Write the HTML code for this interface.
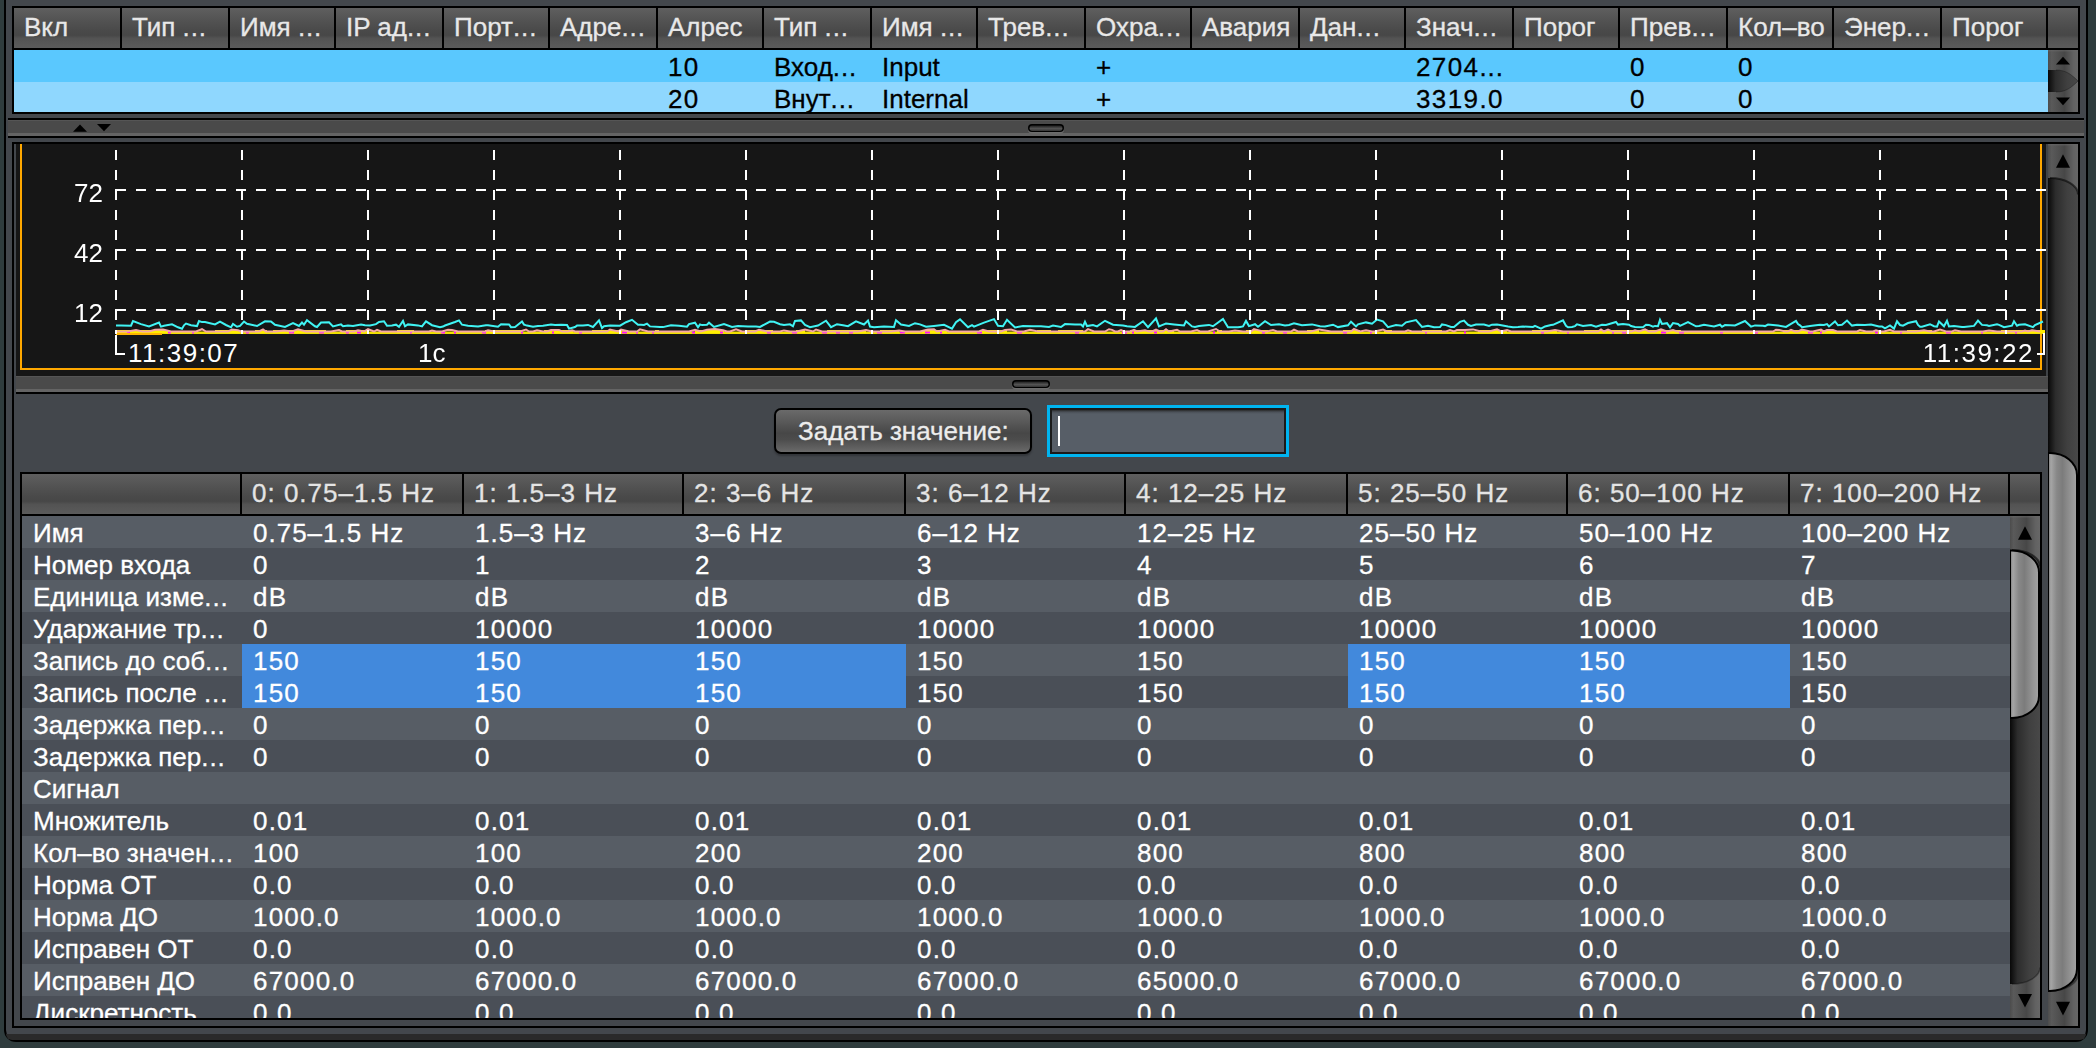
<!DOCTYPE html>
<html><head><meta charset="utf-8"><style>
html,body{margin:0;padding:0;width:2096px;height:1048px;overflow:hidden;background:#2f3c3d;}
div{position:absolute;}
.t{font-family:"Liberation Sans", sans-serif;font-size:26px;line-height:32px;height:32px;white-space:pre;-webkit-text-stroke:0.3px currentColor;}
</style></head><body>
<div style="left:4px;top:-20px;width:2084px;height:1062px;background:#43474c;border:2px solid #000;border-radius:0 0 12px 12px;box-sizing:border-box;"></div><div style="left:6px;top:1034px;width:2080px;height:6px;background:#2a2a2a;border-radius:0 0 10px 10px;"></div><div style="left:12px;top:6px;width:2068px;height:108px;background:#000;"></div><div style="left:14px;top:8px;width:2064px;height:40px;background:linear-gradient(to bottom,#5f5f5f 0%,#535353 30%,#4a4a4a 55%,#474747 68%,#535353 76%,#5b5b5b 100%);"></div><div style="left:120px;top:8px;width:2px;height:40px;background:#000;"></div><div style="left:228px;top:8px;width:2px;height:40px;background:#000;"></div><div style="left:334px;top:8px;width:2px;height:40px;background:#000;"></div><div style="left:442px;top:8px;width:2px;height:40px;background:#000;"></div><div style="left:548px;top:8px;width:2px;height:40px;background:#000;"></div><div style="left:656px;top:8px;width:2px;height:40px;background:#000;"></div><div style="left:762px;top:8px;width:2px;height:40px;background:#000;"></div><div style="left:870px;top:8px;width:2px;height:40px;background:#000;"></div><div style="left:976px;top:8px;width:2px;height:40px;background:#000;"></div><div style="left:1084px;top:8px;width:2px;height:40px;background:#000;"></div><div style="left:1190px;top:8px;width:2px;height:40px;background:#000;"></div><div style="left:1298px;top:8px;width:2px;height:40px;background:#000;"></div><div style="left:1404px;top:8px;width:2px;height:40px;background:#000;"></div><div style="left:1512px;top:8px;width:2px;height:40px;background:#000;"></div><div style="left:1618px;top:8px;width:2px;height:40px;background:#000;"></div><div style="left:1726px;top:8px;width:2px;height:40px;background:#000;"></div><div style="left:1832px;top:8px;width:2px;height:40px;background:#000;"></div><div style="left:1940px;top:8px;width:2px;height:40px;background:#000;"></div><div style="left:2046px;top:8px;width:2px;height:40px;background:#000;"></div><div style="left:14px;top:50px;width:2034px;height:32px;background:#5ac8fe;"></div><div style="left:14px;top:82px;width:2034px;height:30px;background:#8fd7fe;"></div><div class="t" style="left:24px;top:11px;color:#e8e8e8;">Вкл</div><div class="t" style="left:132px;top:11px;color:#e8e8e8;">Тип <span style="letter-spacing:0.9px">...</span></div><div class="t" style="left:240px;top:11px;color:#e8e8e8;">Имя <span style="letter-spacing:0.9px">...</span></div><div class="t" style="left:346px;top:11px;color:#e8e8e8;">IP ад<span style="letter-spacing:0.9px">...</span></div><div class="t" style="left:454px;top:11px;color:#e8e8e8;">Порт<span style="letter-spacing:0.9px">...</span></div><div class="t" style="left:560px;top:11px;color:#e8e8e8;">Адре<span style="letter-spacing:0.9px">...</span></div><div class="t" style="left:668px;top:11px;color:#e8e8e8;">Алрес</div><div class="t" style="left:774px;top:11px;color:#e8e8e8;">Тип <span style="letter-spacing:0.9px">...</span></div><div class="t" style="left:882px;top:11px;color:#e8e8e8;">Имя <span style="letter-spacing:0.9px">...</span></div><div class="t" style="left:988px;top:11px;color:#e8e8e8;">Трев<span style="letter-spacing:0.9px">...</span></div><div class="t" style="left:1096px;top:11px;color:#e8e8e8;">Охра<span style="letter-spacing:0.9px">...</span></div><div class="t" style="left:1202px;top:11px;color:#e8e8e8;">Авария</div><div class="t" style="left:1310px;top:11px;color:#e8e8e8;">Дан<span style="letter-spacing:0.9px">...</span></div><div class="t" style="left:1416px;top:11px;color:#e8e8e8;">Знач<span style="letter-spacing:0.9px">...</span></div><div class="t" style="left:1524px;top:11px;color:#e8e8e8;">Порог</div><div class="t" style="left:1630px;top:11px;color:#e8e8e8;">Прев<span style="letter-spacing:0.9px">...</span></div><div class="t" style="left:1738px;top:11px;color:#e8e8e8;">Кол–во</div><div class="t" style="left:1844px;top:11px;color:#e8e8e8;">Энер<span style="letter-spacing:0.9px">...</span></div><div class="t" style="left:1952px;top:11px;color:#e8e8e8;">Порог</div><div class="t" style="left:668px;top:51px;color:#000;letter-spacing:1.4px;">10</div><div class="t" style="left:774px;top:51px;color:#000;">Вход<span style="letter-spacing:0.9px">...</span></div><div class="t" style="left:882px;top:51px;color:#000;">Input</div><div class="t" style="left:1096px;top:51px;color:#000;">+</div><div class="t" style="left:1416px;top:51px;color:#000;letter-spacing:1.4px;">2704<span style="letter-spacing:0.9px">...</span></div><div class="t" style="left:1630px;top:51px;color:#000;letter-spacing:1.4px;">0</div><div class="t" style="left:1738px;top:51px;color:#000;letter-spacing:1.4px;">0</div><div class="t" style="left:668px;top:83px;color:#000;letter-spacing:1.4px;">20</div><div class="t" style="left:774px;top:83px;color:#000;">Внут<span style="letter-spacing:0.9px">...</span></div><div class="t" style="left:882px;top:83px;color:#000;">Internal</div><div class="t" style="left:1096px;top:83px;color:#000;">+</div><div class="t" style="left:1416px;top:83px;color:#000;letter-spacing:1.4px;">3319.0</div><div class="t" style="left:1630px;top:83px;color:#000;letter-spacing:1.4px;">0</div><div class="t" style="left:1738px;top:83px;color:#000;letter-spacing:1.4px;">0</div><svg style="position:absolute;left:2048px;top:50px" width="30" height="62"><defs><linearGradient id="sbBtn" x1="0" x2="1"><stop offset="0" stop-color="#4c4c4c"/><stop offset="0.12" stop-color="#5a5a5a"/><stop offset="0.55" stop-color="#474747"/><stop offset="0.85" stop-color="#626262"/><stop offset="1" stop-color="#676767"/></linearGradient><linearGradient id="sbTrk" x1="0" x2="1"><stop offset="0" stop-color="#080808"/><stop offset="0.25" stop-color="#2c2c2c"/><stop offset="0.65" stop-color="#404040"/><stop offset="1" stop-color="#484848"/></linearGradient><linearGradient id="sbThm" x1="0" x2="1"><stop offset="0" stop-color="#767676"/><stop offset="0.1" stop-color="#a6a6a6"/><stop offset="0.3" stop-color="#888888"/><stop offset="0.5" stop-color="#7c7c7c"/><stop offset="0.8" stop-color="#959595"/><stop offset="1" stop-color="#a3a3a3"/></linearGradient></defs><rect x="0" y="0" width="30" height="62" fill="url(#sbBtn)"/><rect x="0" y="0" width="30" height="1.5" fill="#6a6a6a" opacity="0.5"/><path d="M0,20 L8,20 C18,20 24,25.0 30,31.0 C24,37.0 18,42 8,42 L0,42 Z" fill="url(#sbTrk)"/><path d="M8,20 C18,20 24,25.0 30,31.0 C24,37.0 18,42 8,42" fill="none" stroke="#000" stroke-opacity="0.3" stroke-width="1"/><polygon points="8.0,14.5 22.0,14.5 15.0,6.699999999999999" fill="#000"/><polygon points="8.0,47.4 22.0,47.4 15.0,55.199999999999996" fill="#000"/></svg><div style="left:8px;top:118px;width:2076px;height:20px;background:#000;"></div><div style="left:8px;top:120px;width:2076px;height:16px;background:linear-gradient(to bottom,#555 0,#555 1px,#4a4a4a 1px,#4a4a4a 13.5px,#646464 13.5px,#646464 15.5px,#3a3a3a 16px);"></div><svg style="position:absolute;left:0;top:118px" width="2096" height="20"><polygon points="73,13.8 87,13.8 80,6.6" fill="#000"/><polygon points="97,6 111,6 104,13.2" fill="#000"/><defs><linearGradient id="hg" x1="0" x2="0" y1="0" y2="1"><stop offset="0" stop-color="#202020"/><stop offset="0.55" stop-color="#545454"/><stop offset="1" stop-color="#333"/></linearGradient></defs><rect x="1028" y="7.6" width="36" height="8" rx="4" fill="#6c6c6c"/><rect x="1028" y="6" width="36" height="8" rx="4" fill="#000"/><rect x="1029.6" y="7.6" width="32.8" height="5.4" rx="2.7" fill="url(#hg)"/></svg><div style="left:12px;top:142px;width:2068px;height:886px;background:#000;"></div><div style="left:14px;top:144px;width:2034px;height:882px;background:#43474c;"></div><div style="left:16px;top:144px;width:2030px;height:232px;background:#161616;"></div><div style="left:2046px;top:144px;width:2px;height:232px;background:#3f4347;"></div><div style="left:20px;top:144px;width:2px;height:226px;background:#ffa800;"></div><div style="left:2040px;top:144px;width:2px;height:226px;background:#ffa800;"></div><div style="left:20px;top:368px;width:2022px;height:2px;background:#ffa800;"></div><svg style="position:absolute;left:0;top:0" width="2096" height="400"><rect x="116" y="331.5" width="1929" height="2.5" fill="#f0e000"/><rect x="116" y="330" width="14" height="3" fill="#ffee00"/><rect x="130" y="330" width="8" height="3" fill="#ffee00"/><rect x="138" y="330" width="26" height="3" fill="#ffee00"/><rect x="164" y="330" width="5" height="3" fill="#ffee00"/><rect x="215" y="330" width="25" height="3" fill="#ffee00"/><rect x="255" y="330" width="12" height="3" fill="#ffee00"/><rect x="273" y="330" width="27" height="3" fill="#ffee00"/><rect x="300" y="330" width="5" height="3" fill="#ffee00"/><rect x="305" y="330" width="14" height="3" fill="#ffee00"/><rect x="319" y="330" width="7" height="3" fill="#ffee00"/><rect x="346" y="330" width="22" height="3" fill="#ffee00"/><rect x="397" y="330" width="6" height="3" fill="#ffee00"/><rect x="403" y="330" width="11" height="3" fill="#ffee00"/><rect x="485" y="330" width="13" height="3" fill="#ffee00"/><rect x="498" y="330" width="23" height="3" fill="#ffee00"/><rect x="544" y="330" width="19" height="3" fill="#ffee00"/><rect x="563" y="330" width="10" height="3" fill="#ffee00"/><rect x="592" y="330" width="4" height="3" fill="#ffee00"/><rect x="596" y="330" width="22" height="3" fill="#ffee00"/><rect x="618" y="330" width="5" height="3" fill="#ffee00"/><rect x="623" y="330" width="5" height="3" fill="#ffee00"/><rect x="655" y="330" width="4" height="3" fill="#ffee00"/><rect x="695" y="330" width="6" height="3" fill="#ffee00"/><rect x="701" y="330" width="9" height="3" fill="#ffee00"/><rect x="710" y="330" width="9" height="3" fill="#ffee00"/><rect x="719" y="330" width="5" height="3" fill="#ffee00"/><rect x="747" y="330" width="26" height="3" fill="#ffee00"/><rect x="796" y="330" width="9" height="3" fill="#ffee00"/><rect x="827" y="330" width="17" height="3" fill="#ffee00"/><rect x="844" y="330" width="22" height="3" fill="#ffee00"/><rect x="880" y="330" width="19" height="3" fill="#ffee00"/><rect x="922" y="330" width="25" height="3" fill="#ffee00"/><rect x="980" y="330" width="27" height="3" fill="#ffee00"/><rect x="1037" y="330" width="14" height="3" fill="#ffee00"/><rect x="1058" y="330" width="4" height="3" fill="#ffee00"/><rect x="1062" y="330" width="21" height="3" fill="#ffee00"/><rect x="1130" y="330" width="25" height="3" fill="#ffee00"/><rect x="1155" y="330" width="19" height="3" fill="#ffee00"/><rect x="1217" y="330" width="5" height="3" fill="#ffee00"/><rect x="1246" y="330" width="4" height="3" fill="#ffee00"/><rect x="1250" y="330" width="18" height="3" fill="#ffee00"/><rect x="1307" y="330" width="12" height="3" fill="#ffee00"/><rect x="1343" y="330" width="17" height="3" fill="#ffee00"/><rect x="1384" y="330" width="8" height="3" fill="#ffee00"/><rect x="1422" y="330" width="20" height="3" fill="#ffee00"/><rect x="1478" y="330" width="29" height="3" fill="#ffee00"/><rect x="1532" y="330" width="25" height="3" fill="#ffee00"/><rect x="1584" y="330" width="29" height="3" fill="#ffee00"/><rect x="1613" y="330" width="9" height="3" fill="#ffee00"/><rect x="1622" y="330" width="19" height="3" fill="#ffee00"/><rect x="1641" y="330" width="11" height="3" fill="#ffee00"/><rect x="1652" y="330" width="29" height="3" fill="#ffee00"/><rect x="1783" y="330" width="25" height="3" fill="#ffee00"/><rect x="1820" y="330" width="16" height="3" fill="#ffee00"/><rect x="1907" y="330" width="25" height="3" fill="#ffee00"/><rect x="2001" y="330" width="19" height="3" fill="#ffee00"/><rect x="2020" y="330" width="25" height="3" fill="#ffee00"/><rect x="127" y="331.5" width="3" height="2" fill="#ff10ff"/><rect x="168" y="331.5" width="3" height="2" fill="#ff10ff"/><rect x="192" y="331.5" width="2" height="2" fill="#ff10ff"/><rect x="246" y="331.5" width="3" height="2" fill="#ff10ff"/><rect x="289" y="331.5" width="5" height="2" fill="#ff10ff"/><rect x="319" y="331.5" width="5" height="2" fill="#ff10ff"/><rect x="346" y="331.5" width="3" height="2" fill="#ff10ff"/><rect x="357" y="331.5" width="4" height="2" fill="#ff10ff"/><rect x="410" y="331.5" width="2" height="2" fill="#ff10ff"/><rect x="441" y="331.5" width="4" height="2" fill="#ff10ff"/><rect x="454" y="331.5" width="2" height="2" fill="#ff10ff"/><rect x="482" y="331.5" width="4" height="2" fill="#ff10ff"/><rect x="521" y="331.5" width="2" height="2" fill="#ff10ff"/><rect x="552" y="331.5" width="2" height="2" fill="#ff10ff"/><rect x="579" y="331.5" width="3" height="2" fill="#ff10ff"/><rect x="622" y="331.5" width="5" height="2" fill="#ff10ff"/><rect x="636" y="331.5" width="2" height="2" fill="#ff10ff"/><rect x="652" y="331.5" width="2" height="2" fill="#ff10ff"/><rect x="692" y="331.5" width="3" height="2" fill="#ff10ff"/><rect x="720" y="331.5" width="3" height="2" fill="#ff10ff"/><rect x="767" y="331.5" width="4" height="2" fill="#ff10ff"/><rect x="792" y="331.5" width="5" height="2" fill="#ff10ff"/><rect x="822" y="331.5" width="5" height="2" fill="#ff10ff"/><rect x="836" y="331.5" width="4" height="2" fill="#ff10ff"/><rect x="849" y="331.5" width="4" height="2" fill="#ff10ff"/><rect x="877" y="331.5" width="5" height="2" fill="#ff10ff"/><rect x="900" y="331.5" width="5" height="2" fill="#ff10ff"/><rect x="925" y="331.5" width="5" height="2" fill="#ff10ff"/><rect x="940" y="331.5" width="2" height="2" fill="#ff10ff"/><rect x="977" y="331.5" width="5" height="2" fill="#ff10ff"/><rect x="1017" y="331.5" width="5" height="2" fill="#ff10ff"/><rect x="1075" y="331.5" width="4" height="2" fill="#ff10ff"/><rect x="1122" y="331.5" width="5" height="2" fill="#ff10ff"/><rect x="1132" y="331.5" width="2" height="2" fill="#ff10ff"/><rect x="1154" y="331.5" width="3" height="2" fill="#ff10ff"/><rect x="1213" y="331.5" width="2" height="2" fill="#ff10ff"/><rect x="1262" y="331.5" width="3" height="2" fill="#ff10ff"/><rect x="1283" y="331.5" width="4" height="2" fill="#ff10ff"/><rect x="1343" y="331.5" width="4" height="2" fill="#ff10ff"/><rect x="1370" y="331.5" width="2" height="2" fill="#ff10ff"/><rect x="1425" y="331.5" width="2" height="2" fill="#ff10ff"/><rect x="1464" y="331.5" width="2" height="2" fill="#ff10ff"/><rect x="1501" y="331.5" width="2" height="2" fill="#ff10ff"/><rect x="1541" y="331.5" width="3" height="2" fill="#ff10ff"/><rect x="1567" y="331.5" width="2" height="2" fill="#ff10ff"/><rect x="1612" y="331.5" width="2" height="2" fill="#ff10ff"/><rect x="1622" y="331.5" width="4" height="2" fill="#ff10ff"/><rect x="1661" y="331.5" width="5" height="2" fill="#ff10ff"/><rect x="1679" y="331.5" width="5" height="2" fill="#ff10ff"/><rect x="1720" y="331.5" width="3" height="2" fill="#ff10ff"/><rect x="1755" y="331.5" width="3" height="2" fill="#ff10ff"/><rect x="1808" y="331.5" width="5" height="2" fill="#ff10ff"/><rect x="1820" y="331.5" width="2" height="2" fill="#ff10ff"/><rect x="1875" y="331.5" width="3" height="2" fill="#ff10ff"/><rect x="1900" y="331.5" width="2" height="2" fill="#ff10ff"/><rect x="1946" y="331.5" width="5" height="2" fill="#ff10ff"/><rect x="1981" y="331.5" width="2" height="2" fill="#ff10ff"/><rect x="2015" y="331.5" width="2" height="2" fill="#ff10ff"/><rect x="116" y="333" width="46" height="2" fill="#ffb400"/><polyline points="116,331.5 122,331.5 128,331.5 136,330.1 142,331.5 146,331.5 149,331.5 155,329.8 163,329.6 171,331.5 174,331.5 182,331.5 190,331.5 196,331.5 202,329.2 206,331.5 210,331.5 218,331.5 222,331.5 228,331.5 232,329.6 238,330.2 241,331.5 245,331.5 251,331.5 259,331.5 263,329.4 266,331.5 270,331.5 273,331.5 276,331.5 284,330.4 292,331.5 298,329.4 306,331.5 314,331.5 318,331.5 322,331.5 325,331.5 331,331.5 339,330.0 342,331.5 346,331.5 354,331.5 358,330.2 364,331.5 368,329.2 374,331.5 377,329.8 381,331.5 389,331.5 397,331.5 405,331.5 409,331.5 415,331.5 421,331.5 429,331.5 432,330.5 436,331.5 439,331.5 442,331.5 448,329.8 452,330.0 458,331.5 466,331.5 469,331.5 477,331.5 485,331.5 488,330.3 494,331.5 500,331.5 506,331.5 512,331.5 520,331.5 526,329.5 529,331.5 533,331.5 537,330.3 543,331.5 547,331.5 551,330.0 559,329.9 562,331.5 568,331.5 572,330.2 575,331.5 578,331.5 584,331.5 588,331.5 592,331.5 595,331.5 601,331.5 607,331.5 610,329.5 618,331.5 621,329.6 629,331.5 637,331.5 640,329.4 648,331.5 656,331.5 664,331.5 672,331.5 675,331.5 678,331.5 686,331.5 689,331.5 695,329.8 701,331.5 707,329.8 715,329.0 723,330.2 727,331.5 730,331.5 736,329.2 742,331.5 748,331.5 751,331.5 755,331.5 759,329.7 767,331.5 770,331.5 773,331.5 776,331.5 780,331.5 784,330.4 790,331.5 794,331.5 797,331.5 805,329.5 813,331.5 816,329.5 822,331.5 826,331.5 834,331.5 840,331.5 846,331.5 850,331.5 854,331.5 858,331.5 866,330.1 872,331.5 878,331.5 881,331.5 885,331.5 891,331.5 899,330.4 905,331.5 913,331.5 917,331.5 920,331.5 928,329.6 934,329.2 937,331.5 945,329.8 949,331.5 953,331.5 956,331.5 962,331.5 970,331.5 976,331.5 979,331.5 983,329.9 989,331.5 995,331.5 998,331.5 1001,331.5 1005,330.0 1011,329.6 1017,331.5 1020,331.5 1024,331.5 1030,329.7 1038,331.5 1041,331.5 1044,331.5 1052,331.5 1056,331.5 1059,331.5 1062,331.5 1070,331.5 1074,331.5 1078,331.5 1082,331.5 1085,331.5 1088,329.1 1094,331.5 1102,331.5 1105,331.5 1109,329.2 1112,329.9 1115,331.5 1118,331.5 1121,330.1 1124,331.5 1130,331.5 1134,329.9 1137,331.5 1145,330.3 1149,331.5 1152,331.5 1156,329.7 1160,331.5 1163,331.5 1166,329.3 1169,331.5 1177,329.7 1180,331.5 1188,331.5 1191,331.5 1197,330.1 1200,331.5 1208,331.5 1216,329.0 1220,331.5 1223,331.5 1229,331.5 1235,330.4 1243,331.5 1251,331.5 1254,329.2 1257,329.9 1263,331.5 1267,331.5 1273,330.0 1277,331.5 1285,331.5 1291,331.5 1294,329.6 1298,331.5 1304,331.5 1308,331.5 1311,331.5 1319,329.4 1325,330.4 1331,331.5 1339,331.5 1345,331.5 1351,331.5 1354,329.0 1360,331.5 1366,330.3 1372,331.5 1375,331.5 1383,329.6 1387,331.5 1390,331.5 1394,331.5 1397,331.5 1405,331.5 1408,330.4 1412,331.5 1420,331.5 1423,331.5 1426,331.5 1432,331.5 1435,331.5 1443,331.5 1446,331.5 1450,330.0 1454,331.5 1457,330.1 1465,329.9 1473,329.4 1481,331.5 1489,331.5 1497,329.4 1501,331.5 1507,330.0 1511,331.5 1519,331.5 1527,331.5 1535,331.5 1539,331.5 1547,331.5 1555,330.1 1563,331.5 1569,331.5 1575,331.5 1579,331.5 1582,331.5 1590,331.5 1598,331.5 1601,329.4 1604,331.5 1608,329.5 1612,331.5 1618,331.5 1626,331.5 1632,331.5 1635,330.3 1639,331.5 1645,329.4 1649,331.5 1655,331.5 1661,329.3 1667,331.5 1673,330.0 1677,331.5 1683,331.5 1689,331.5 1693,331.5 1696,331.5 1702,331.5 1706,331.5 1710,331.5 1714,331.5 1718,331.5 1724,331.5 1732,331.5 1738,331.5 1742,331.5 1748,331.5 1752,331.5 1758,331.5 1764,331.5 1767,331.5 1770,331.5 1773,331.5 1776,329.7 1779,329.9 1785,331.5 1788,331.5 1791,329.9 1795,331.5 1798,331.5 1802,329.5 1810,331.5 1813,331.5 1821,329.5 1824,331.5 1827,330.0 1833,330.1 1837,331.5 1841,331.5 1844,331.5 1850,331.5 1853,331.5 1857,331.5 1860,330.1 1866,331.5 1869,331.5 1873,331.5 1876,330.4 1880,331.5 1884,331.5 1890,329.9 1894,331.5 1900,331.5 1906,331.5 1912,331.5 1916,331.5 1924,330.3 1930,331.5 1934,331.5 1940,329.5 1946,331.5 1952,331.5 1955,330.2 1961,331.5 1965,331.5 1969,331.5 1972,331.5 1976,331.5 1979,331.5 1983,331.5 1989,330.4 1997,331.5 2005,331.5 2009,331.5 2013,331.5 2019,331.5 2022,331.5 2025,330.5 2028,331.5 2032,330.2 2040,331.5" fill="none" stroke="#f5a5a5" stroke-width="2"/><polyline points="116,325.5 121,325.5 131,325.7 133,321.1 141,324.1 149,326.4 159,322.6 161,326.6 164,325.7 172,324.3 178,327.3 182,328.8 184,325.3 186,323.6 191,325.2 197,326.1 199,321.1 202,322.1 205,322.0 215,324.4 220,321.7 226,325.0 231,327.3 233,323.9 237,326.7 240,325.9 244,321.5 247,323.8 257,326.0 265,321.3 271,321.4 275,324.8 285,327.0 293,323.0 299,326.0 302,322.5 304,324.6 307,320.2 315,326.3 317,327.0 321,322.5 329,322.3 333,326.4 341,324.4 343,326.3 348,325.4 353,325.9 361,324.4 365,325.3 370,325.5 376,324.1 379,321.9 384,321.3 387,325.7 392,325.6 396,324.7 399,326.9 403,321.0 405,326.3 408,324.4 418,325.4 422,326.4 426,321.3 432,325.2 440,327.2 443,326.6 445,325.5 455,322.0 459,320.4 462,324.7 468,325.7 478,326.6 486,325.3 488,325.2 498,326.7 501,324.3 509,324.4 511,327.2 515,327.1 517,325.5 522,321.5 524,324.6 527,325.6 533,326.8 538,325.9 543,325.7 551,324.5 555,325.0 561,324.7 567,324.9 569,328.6 575,327.0 577,325.6 583,325.5 588,324.9 593,327.0 599,320.4 602,328.1 604,326.3 610,325.6 620,325.7 626,322.2 632,319.8 638,324.7 641,324.8 644,325.0 647,323.7 650,326.4 660,327.1 663,327.1 671,325.2 679,325.7 687,326.7 689,324.1 695,322.7 698,327.3 700,324.4 702,325.1 707,324.7 709,322.7 714,327.0 724,324.1 732,326.9 738,326.0 748,326.5 756,326.6 760,326.9 770,321.5 774,321.8 780,324.2 784,325.1 790,324.3 793,326.3 795,321.0 801,320.4 805,324.9 810,327.2 818,325.5 826,320.7 831,327.2 837,324.2 843,325.3 848,326.2 856,321.3 864,324.5 868,320.5 870,326.6 874,327.2 884,326.4 894,326.9 896,320.3 901,324.5 909,325.9 915,323.2 920,324.4 926,326.8 934,325.9 944,324.8 952,328.6 956,322.2 960,319.4 968,327.2 972,325.1 974,326.6 984,322.6 994,319.1 998,325.8 1003,326.2 1007,319.8 1015,327.5 1023,326.0 1033,326.3 1037,326.2 1041,326.3 1049,327.0 1053,325.5 1061,327.0 1065,324.1 1075,324.6 1081,324.5 1083,326.5 1085,321.7 1087,326.1 1093,325.0 1097,326.4 1105,320.8 1113,324.7 1123,325.5 1127,326.2 1135,326.9 1143,321.3 1148,327.2 1156,318.3 1159,326.4 1162,325.1 1166,323.6 1174,324.5 1184,325.5 1186,321.3 1192,326.4 1195,327.0 1199,326.1 1209,324.9 1213,326.2 1223,318.9 1228,327.2 1238,327.3 1240,326.9 1243,326.4 1246,320.9 1249,326.1 1255,324.2 1258,326.7 1260,325.2 1265,321.2 1271,325.0 1279,324.3 1285,325.4 1289,325.0 1294,323.4 1302,325.3 1312,324.4 1320,326.3 1325,326.5 1333,324.7 1338,327.1 1348,325.3 1351,321.7 1356,326.4 1358,324.3 1366,322.4 1372,323.7 1377,319.6 1383,321.4 1388,327.2 1396,325.0 1402,325.7 1406,322.3 1416,320.0 1422,327.0 1428,325.7 1434,327.3 1440,327.1 1442,324.4 1446,325.1 1451,326.9 1454,327.0 1460,321.9 1464,320.6 1468,324.8 1471,326.0 1476,324.6 1484,324.5 1489,326.0 1492,324.7 1497,324.4 1500,324.9 1508,326.6 1513,327.2 1518,327.0 1523,326.5 1533,327.0 1535,325.9 1541,328.6 1545,326.4 1551,325.1 1553,324.8 1563,320.4 1566,325.8 1568,327.3 1572,326.9 1575,326.1 1577,324.3 1583,325.9 1591,325.0 1596,326.7 1602,324.8 1606,325.0 1616,322.0 1618,324.6 1623,324.1 1629,324.7 1631,326.1 1635,326.9 1643,327.2 1646,324.7 1649,324.9 1653,326.6 1655,325.9 1658,326.2 1660,319.8 1662,324.0 1667,323.2 1670,327.3 1673,323.1 1678,324.0 1680,325.8 1688,322.1 1696,326.3 1699,326.0 1704,324.8 1714,326.4 1720,324.7 1722,326.8 1725,325.1 1735,325.4 1745,321.0 1751,326.6 1755,325.4 1763,325.7 1765,326.1 1768,324.5 1778,325.5 1786,326.9 1796,320.9 1798,324.0 1800,325.3 1802,327.2 1810,326.0 1820,324.8 1824,325.0 1827,324.1 1829,326.4 1835,321.5 1838,325.3 1842,324.8 1847,320.5 1852,325.6 1857,324.7 1865,324.9 1871,324.6 1879,326.4 1882,326.4 1885,328.4 1890,325.5 1894,328.6 1897,321.3 1900,325.0 1903,325.7 1908,323.0 1916,321.2 1918,325.0 1920,326.8 1922,326.7 1930,324.2 1934,326.2 1937,326.6 1939,321.5 1944,326.3 1947,320.7 1949,326.5 1954,325.9 1962,327.0 1964,327.0 1974,325.9 1978,320.6 1982,324.9 1987,325.3 1989,325.9 1997,324.2 1999,324.9 2004,327.2 2012,325.7 2014,321.2 2017,325.7 2019,324.8 2025,324.3 2033,327.2 2035,325.0 2043,321.5" fill="none" stroke="#40f4f4" stroke-width="2"/><line x1="116" y1="150" x2="116" y2="334" stroke="#fff" stroke-width="2" stroke-dasharray="10 10"/><line x1="242" y1="150" x2="242" y2="334" stroke="#fff" stroke-width="2" stroke-dasharray="10 10"/><line x1="368" y1="150" x2="368" y2="334" stroke="#fff" stroke-width="2" stroke-dasharray="10 10"/><line x1="494" y1="150" x2="494" y2="334" stroke="#fff" stroke-width="2" stroke-dasharray="10 10"/><line x1="620" y1="150" x2="620" y2="334" stroke="#fff" stroke-width="2" stroke-dasharray="10 10"/><line x1="746" y1="150" x2="746" y2="334" stroke="#fff" stroke-width="2" stroke-dasharray="10 10"/><line x1="872" y1="150" x2="872" y2="334" stroke="#fff" stroke-width="2" stroke-dasharray="10 10"/><line x1="998" y1="150" x2="998" y2="334" stroke="#fff" stroke-width="2" stroke-dasharray="10 10"/><line x1="1124" y1="150" x2="1124" y2="334" stroke="#fff" stroke-width="2" stroke-dasharray="10 10"/><line x1="1250" y1="150" x2="1250" y2="334" stroke="#fff" stroke-width="2" stroke-dasharray="10 10"/><line x1="1376" y1="150" x2="1376" y2="334" stroke="#fff" stroke-width="2" stroke-dasharray="10 10"/><line x1="1502" y1="150" x2="1502" y2="334" stroke="#fff" stroke-width="2" stroke-dasharray="10 10"/><line x1="1628" y1="150" x2="1628" y2="334" stroke="#fff" stroke-width="2" stroke-dasharray="10 10"/><line x1="1754" y1="150" x2="1754" y2="334" stroke="#fff" stroke-width="2" stroke-dasharray="10 10"/><line x1="1880" y1="150" x2="1880" y2="334" stroke="#fff" stroke-width="2" stroke-dasharray="10 10"/><line x1="2006" y1="150" x2="2006" y2="334" stroke="#fff" stroke-width="2" stroke-dasharray="10 10"/><line x1="116" y1="190" x2="2046" y2="190" stroke="#fff" stroke-width="2" stroke-dasharray="10 10"/><line x1="115" y1="190" x2="126" y2="190" stroke="#fff" stroke-width="2"/><line x1="116" y1="250" x2="2046" y2="250" stroke="#fff" stroke-width="2" stroke-dasharray="10 10"/><line x1="115" y1="250" x2="126" y2="250" stroke="#fff" stroke-width="2"/><line x1="116" y1="310" x2="2046" y2="310" stroke="#fff" stroke-width="2" stroke-dasharray="10 10"/><line x1="115" y1="310" x2="126" y2="310" stroke="#fff" stroke-width="2"/><polyline points="116,335 116,354 125,354" fill="none" stroke="#fff" stroke-width="2"/><polyline points="2044,333 2044,354 2037,354" fill="none" stroke="#fff" stroke-width="2"/></svg><div class="t" style="left:0;width:103px;text-align:right;top:177px;color:#fff;-webkit-text-stroke:0">72</div><div class="t" style="left:0;width:103px;text-align:right;top:237px;color:#fff;-webkit-text-stroke:0">42</div><div class="t" style="left:0;width:103px;text-align:right;top:297px;color:#fff;-webkit-text-stroke:0">12</div><div class="t" style="left:128px;top:337px;color:#fff;letter-spacing:1.5px;-webkit-text-stroke:0;">11:39:07</div><div class="t" style="left:418px;top:337px;color:#fff;-webkit-text-stroke:0;">1c</div><div class="t" style="left:0;width:2034px;text-align:right;top:337px;color:#fff;letter-spacing:1.5px;-webkit-text-stroke:0">11:39:22</div><div style="left:16px;top:376px;width:2032px;height:18px;background:#000;"></div><div style="left:16px;top:376px;width:2032px;height:16px;background:linear-gradient(to bottom,#555 0,#555 1px,#4a4a4a 1px,#4a4a4a 13.5px,#646464 13.5px,#646464 15.5px,#3a3a3a 16px);"></div><svg style="position:absolute;left:1000px;top:376px" width="70" height="18"><rect x="12" y="5.6" width="38" height="8" rx="4" fill="#6c6c6c"/><rect x="12" y="4" width="38" height="8" rx="4" fill="#000"/><rect x="13.6" y="5.6" width="34.8" height="5.4" rx="2.7" fill="url(#hg)"/></svg><div style="left:774px;top:408px;width:258px;height:46px;box-sizing:border-box;border:2px solid #000;border-radius:7px;background:linear-gradient(to bottom,#6a6a6a 0%,#585858 30%,#474747 55%,#4c4c4c 70%,#6a6a6a 100%);box-shadow:0 2px 2px rgba(0,0,0,0.25)"></div><div class="t" style="left:798px;top:415px;color:#ececec;">Задать значение:</div><div style="left:1047px;top:405px;width:242px;height:52px;box-sizing:border-box;border:3px solid #00b4f0;background:#1a1a1a;"></div><div style="left:1052px;top:410px;width:232px;height:42px;background:linear-gradient(to bottom,#2a2a2a 0,#4a5058 2px,#575e67 4px,#575e67 100%);"></div><div style="left:1058px;top:416px;width:2px;height:30px;background:#fff;"></div><div style="left:20px;top:472px;width:2022px;height:548px;background:#000;"></div><div style="left:22px;top:474px;width:2018px;height:40px;background:linear-gradient(to bottom,#5f5f5f 0%,#535353 30%,#4a4a4a 55%,#474747 68%,#535353 76%,#5b5b5b 100%);"></div><div style="left:240px;top:474px;width:2px;height:40px;background:#000;"></div><div style="left:462px;top:474px;width:2px;height:40px;background:#000;"></div><div style="left:682px;top:474px;width:2px;height:40px;background:#000;"></div><div style="left:904px;top:474px;width:2px;height:40px;background:#000;"></div><div style="left:1124px;top:474px;width:2px;height:40px;background:#000;"></div><div style="left:1346px;top:474px;width:2px;height:40px;background:#000;"></div><div style="left:1566px;top:474px;width:2px;height:40px;background:#000;"></div><div style="left:1788px;top:474px;width:2px;height:40px;background:#000;"></div><div style="left:2008px;top:474px;width:2px;height:40px;background:#000;"></div><div class="t" style="left:252px;top:477px;color:#e4e4e4;letter-spacing:1.0px;">0: 0.75–1.5 Hz</div><div class="t" style="left:474px;top:477px;color:#e4e4e4;letter-spacing:1.0px;">1: 1.5–3 Hz</div><div class="t" style="left:694px;top:477px;color:#e4e4e4;letter-spacing:1.0px;">2: 3–6 Hz</div><div class="t" style="left:916px;top:477px;color:#e4e4e4;letter-spacing:1.0px;">3: 6–12 Hz</div><div class="t" style="left:1136px;top:477px;color:#e4e4e4;letter-spacing:1.0px;">4: 12–25 Hz</div><div class="t" style="left:1358px;top:477px;color:#e4e4e4;letter-spacing:1.0px;">5: 25–50 Hz</div><div class="t" style="left:1578px;top:477px;color:#e4e4e4;letter-spacing:1.0px;">6: 50–100 Hz</div><div class="t" style="left:1800px;top:477px;color:#e4e4e4;letter-spacing:1.0px;">7: 100–200 Hz</div><div style="left:22px;top:516px;width:1988px;height:502px;overflow:hidden"><div style="left:0;top:0px;width:1988px;height:32px;background:#575d65"></div><div style="left:0;top:32px;width:1988px;height:32px;background:#4a4f57"></div><div style="left:0;top:64px;width:1988px;height:32px;background:#575d65"></div><div style="left:0;top:96px;width:1988px;height:32px;background:#4a4f57"></div><div style="left:0;top:128px;width:1988px;height:32px;background:#575d65"></div><div style="left:220px;top:128px;width:664px;height:32px;background:#4289dc"></div><div style="left:1326px;top:128px;width:442px;height:32px;background:#4289dc"></div><div style="left:0;top:160px;width:1988px;height:32px;background:#4a4f57"></div><div style="left:220px;top:160px;width:664px;height:32px;background:#4289dc"></div><div style="left:1326px;top:160px;width:442px;height:32px;background:#4289dc"></div><div style="left:0;top:192px;width:1988px;height:32px;background:#575d65"></div><div style="left:0;top:224px;width:1988px;height:32px;background:#4a4f57"></div><div style="left:0;top:256px;width:1988px;height:32px;background:#575d65"></div><div style="left:0;top:288px;width:1988px;height:32px;background:#4a4f57"></div><div style="left:0;top:320px;width:1988px;height:32px;background:#575d65"></div><div style="left:0;top:352px;width:1988px;height:32px;background:#4a4f57"></div><div style="left:0;top:384px;width:1988px;height:32px;background:#575d65"></div><div style="left:0;top:416px;width:1988px;height:32px;background:#4a4f57"></div><div style="left:0;top:448px;width:1988px;height:32px;background:#575d65"></div><div style="left:0;top:480px;width:1988px;height:32px;background:#4a4f57"></div><div class="t" style="left:11px;top:1px;color:#fff">Имя</div><div class="t" style="left:231px;top:1px;color:#fff;letter-spacing:1.0px">0.75–1.5 Hz</div><div class="t" style="left:453px;top:1px;color:#fff;letter-spacing:1.0px">1.5–3 Hz</div><div class="t" style="left:673px;top:1px;color:#fff;letter-spacing:1.0px">3–6 Hz</div><div class="t" style="left:895px;top:1px;color:#fff;letter-spacing:1.0px">6–12 Hz</div><div class="t" style="left:1115px;top:1px;color:#fff;letter-spacing:1.0px">12–25 Hz</div><div class="t" style="left:1337px;top:1px;color:#fff;letter-spacing:1.0px">25–50 Hz</div><div class="t" style="left:1557px;top:1px;color:#fff;letter-spacing:1.0px">50–100 Hz</div><div class="t" style="left:1779px;top:1px;color:#fff;letter-spacing:1.0px">100–200 Hz</div><div class="t" style="left:11px;top:33px;color:#fff">Номер входа</div><div class="t" style="left:231px;top:33px;color:#fff;letter-spacing:1.2px">0</div><div class="t" style="left:453px;top:33px;color:#fff;letter-spacing:1.2px">1</div><div class="t" style="left:673px;top:33px;color:#fff;letter-spacing:1.2px">2</div><div class="t" style="left:895px;top:33px;color:#fff;letter-spacing:1.2px">3</div><div class="t" style="left:1115px;top:33px;color:#fff;letter-spacing:1.2px">4</div><div class="t" style="left:1337px;top:33px;color:#fff;letter-spacing:1.2px">5</div><div class="t" style="left:1557px;top:33px;color:#fff;letter-spacing:1.2px">6</div><div class="t" style="left:1779px;top:33px;color:#fff;letter-spacing:1.2px">7</div><div class="t" style="left:11px;top:65px;color:#fff">Единица изме<span style="letter-spacing:0.9px">...</span></div><div class="t" style="left:231px;top:65px;color:#fff;letter-spacing:1.2px">dB</div><div class="t" style="left:453px;top:65px;color:#fff;letter-spacing:1.2px">dB</div><div class="t" style="left:673px;top:65px;color:#fff;letter-spacing:1.2px">dB</div><div class="t" style="left:895px;top:65px;color:#fff;letter-spacing:1.2px">dB</div><div class="t" style="left:1115px;top:65px;color:#fff;letter-spacing:1.2px">dB</div><div class="t" style="left:1337px;top:65px;color:#fff;letter-spacing:1.2px">dB</div><div class="t" style="left:1557px;top:65px;color:#fff;letter-spacing:1.2px">dB</div><div class="t" style="left:1779px;top:65px;color:#fff;letter-spacing:1.2px">dB</div><div class="t" style="left:11px;top:97px;color:#fff">Ударжание тр<span style="letter-spacing:0.9px">...</span></div><div class="t" style="left:231px;top:97px;color:#fff;letter-spacing:1.2px">0</div><div class="t" style="left:453px;top:97px;color:#fff;letter-spacing:1.2px">10000</div><div class="t" style="left:673px;top:97px;color:#fff;letter-spacing:1.2px">10000</div><div class="t" style="left:895px;top:97px;color:#fff;letter-spacing:1.2px">10000</div><div class="t" style="left:1115px;top:97px;color:#fff;letter-spacing:1.2px">10000</div><div class="t" style="left:1337px;top:97px;color:#fff;letter-spacing:1.2px">10000</div><div class="t" style="left:1557px;top:97px;color:#fff;letter-spacing:1.2px">10000</div><div class="t" style="left:1779px;top:97px;color:#fff;letter-spacing:1.2px">10000</div><div class="t" style="left:11px;top:129px;color:#fff">Запись до соб<span style="letter-spacing:0.9px">...</span></div><div class="t" style="left:231px;top:129px;color:#fff;letter-spacing:1.2px">150</div><div class="t" style="left:453px;top:129px;color:#fff;letter-spacing:1.2px">150</div><div class="t" style="left:673px;top:129px;color:#fff;letter-spacing:1.2px">150</div><div class="t" style="left:895px;top:129px;color:#fff;letter-spacing:1.2px">150</div><div class="t" style="left:1115px;top:129px;color:#fff;letter-spacing:1.2px">150</div><div class="t" style="left:1337px;top:129px;color:#fff;letter-spacing:1.2px">150</div><div class="t" style="left:1557px;top:129px;color:#fff;letter-spacing:1.2px">150</div><div class="t" style="left:1779px;top:129px;color:#fff;letter-spacing:1.2px">150</div><div class="t" style="left:11px;top:161px;color:#fff">Запись после <span style="letter-spacing:0.9px">...</span></div><div class="t" style="left:231px;top:161px;color:#fff;letter-spacing:1.2px">150</div><div class="t" style="left:453px;top:161px;color:#fff;letter-spacing:1.2px">150</div><div class="t" style="left:673px;top:161px;color:#fff;letter-spacing:1.2px">150</div><div class="t" style="left:895px;top:161px;color:#fff;letter-spacing:1.2px">150</div><div class="t" style="left:1115px;top:161px;color:#fff;letter-spacing:1.2px">150</div><div class="t" style="left:1337px;top:161px;color:#fff;letter-spacing:1.2px">150</div><div class="t" style="left:1557px;top:161px;color:#fff;letter-spacing:1.2px">150</div><div class="t" style="left:1779px;top:161px;color:#fff;letter-spacing:1.2px">150</div><div class="t" style="left:11px;top:193px;color:#fff">Задержка пер<span style="letter-spacing:0.9px">...</span></div><div class="t" style="left:231px;top:193px;color:#fff;letter-spacing:1.2px">0</div><div class="t" style="left:453px;top:193px;color:#fff;letter-spacing:1.2px">0</div><div class="t" style="left:673px;top:193px;color:#fff;letter-spacing:1.2px">0</div><div class="t" style="left:895px;top:193px;color:#fff;letter-spacing:1.2px">0</div><div class="t" style="left:1115px;top:193px;color:#fff;letter-spacing:1.2px">0</div><div class="t" style="left:1337px;top:193px;color:#fff;letter-spacing:1.2px">0</div><div class="t" style="left:1557px;top:193px;color:#fff;letter-spacing:1.2px">0</div><div class="t" style="left:1779px;top:193px;color:#fff;letter-spacing:1.2px">0</div><div class="t" style="left:11px;top:225px;color:#fff">Задержка пер<span style="letter-spacing:0.9px">...</span></div><div class="t" style="left:231px;top:225px;color:#fff;letter-spacing:1.2px">0</div><div class="t" style="left:453px;top:225px;color:#fff;letter-spacing:1.2px">0</div><div class="t" style="left:673px;top:225px;color:#fff;letter-spacing:1.2px">0</div><div class="t" style="left:895px;top:225px;color:#fff;letter-spacing:1.2px">0</div><div class="t" style="left:1115px;top:225px;color:#fff;letter-spacing:1.2px">0</div><div class="t" style="left:1337px;top:225px;color:#fff;letter-spacing:1.2px">0</div><div class="t" style="left:1557px;top:225px;color:#fff;letter-spacing:1.2px">0</div><div class="t" style="left:1779px;top:225px;color:#fff;letter-spacing:1.2px">0</div><div class="t" style="left:11px;top:257px;color:#fff">Сигнал</div><div class="t" style="left:11px;top:289px;color:#fff">Множитель</div><div class="t" style="left:231px;top:289px;color:#fff;letter-spacing:1.2px">0.01</div><div class="t" style="left:453px;top:289px;color:#fff;letter-spacing:1.2px">0.01</div><div class="t" style="left:673px;top:289px;color:#fff;letter-spacing:1.2px">0.01</div><div class="t" style="left:895px;top:289px;color:#fff;letter-spacing:1.2px">0.01</div><div class="t" style="left:1115px;top:289px;color:#fff;letter-spacing:1.2px">0.01</div><div class="t" style="left:1337px;top:289px;color:#fff;letter-spacing:1.2px">0.01</div><div class="t" style="left:1557px;top:289px;color:#fff;letter-spacing:1.2px">0.01</div><div class="t" style="left:1779px;top:289px;color:#fff;letter-spacing:1.2px">0.01</div><div class="t" style="left:11px;top:321px;color:#fff">Кол–во значен<span style="letter-spacing:0.9px">...</span></div><div class="t" style="left:231px;top:321px;color:#fff;letter-spacing:1.2px">100</div><div class="t" style="left:453px;top:321px;color:#fff;letter-spacing:1.2px">100</div><div class="t" style="left:673px;top:321px;color:#fff;letter-spacing:1.2px">200</div><div class="t" style="left:895px;top:321px;color:#fff;letter-spacing:1.2px">200</div><div class="t" style="left:1115px;top:321px;color:#fff;letter-spacing:1.2px">800</div><div class="t" style="left:1337px;top:321px;color:#fff;letter-spacing:1.2px">800</div><div class="t" style="left:1557px;top:321px;color:#fff;letter-spacing:1.2px">800</div><div class="t" style="left:1779px;top:321px;color:#fff;letter-spacing:1.2px">800</div><div class="t" style="left:11px;top:353px;color:#fff">Норма ОТ</div><div class="t" style="left:231px;top:353px;color:#fff;letter-spacing:1.2px">0.0</div><div class="t" style="left:453px;top:353px;color:#fff;letter-spacing:1.2px">0.0</div><div class="t" style="left:673px;top:353px;color:#fff;letter-spacing:1.2px">0.0</div><div class="t" style="left:895px;top:353px;color:#fff;letter-spacing:1.2px">0.0</div><div class="t" style="left:1115px;top:353px;color:#fff;letter-spacing:1.2px">0.0</div><div class="t" style="left:1337px;top:353px;color:#fff;letter-spacing:1.2px">0.0</div><div class="t" style="left:1557px;top:353px;color:#fff;letter-spacing:1.2px">0.0</div><div class="t" style="left:1779px;top:353px;color:#fff;letter-spacing:1.2px">0.0</div><div class="t" style="left:11px;top:385px;color:#fff">Норма ДО</div><div class="t" style="left:231px;top:385px;color:#fff;letter-spacing:1.2px">1000.0</div><div class="t" style="left:453px;top:385px;color:#fff;letter-spacing:1.2px">1000.0</div><div class="t" style="left:673px;top:385px;color:#fff;letter-spacing:1.2px">1000.0</div><div class="t" style="left:895px;top:385px;color:#fff;letter-spacing:1.2px">1000.0</div><div class="t" style="left:1115px;top:385px;color:#fff;letter-spacing:1.2px">1000.0</div><div class="t" style="left:1337px;top:385px;color:#fff;letter-spacing:1.2px">1000.0</div><div class="t" style="left:1557px;top:385px;color:#fff;letter-spacing:1.2px">1000.0</div><div class="t" style="left:1779px;top:385px;color:#fff;letter-spacing:1.2px">1000.0</div><div class="t" style="left:11px;top:417px;color:#fff">Исправен ОТ</div><div class="t" style="left:231px;top:417px;color:#fff;letter-spacing:1.2px">0.0</div><div class="t" style="left:453px;top:417px;color:#fff;letter-spacing:1.2px">0.0</div><div class="t" style="left:673px;top:417px;color:#fff;letter-spacing:1.2px">0.0</div><div class="t" style="left:895px;top:417px;color:#fff;letter-spacing:1.2px">0.0</div><div class="t" style="left:1115px;top:417px;color:#fff;letter-spacing:1.2px">0.0</div><div class="t" style="left:1337px;top:417px;color:#fff;letter-spacing:1.2px">0.0</div><div class="t" style="left:1557px;top:417px;color:#fff;letter-spacing:1.2px">0.0</div><div class="t" style="left:1779px;top:417px;color:#fff;letter-spacing:1.2px">0.0</div><div class="t" style="left:11px;top:449px;color:#fff">Исправен ДО</div><div class="t" style="left:231px;top:449px;color:#fff;letter-spacing:1.2px">67000.0</div><div class="t" style="left:453px;top:449px;color:#fff;letter-spacing:1.2px">67000.0</div><div class="t" style="left:673px;top:449px;color:#fff;letter-spacing:1.2px">67000.0</div><div class="t" style="left:895px;top:449px;color:#fff;letter-spacing:1.2px">67000.0</div><div class="t" style="left:1115px;top:449px;color:#fff;letter-spacing:1.2px">65000.0</div><div class="t" style="left:1337px;top:449px;color:#fff;letter-spacing:1.2px">67000.0</div><div class="t" style="left:1557px;top:449px;color:#fff;letter-spacing:1.2px">67000.0</div><div class="t" style="left:1779px;top:449px;color:#fff;letter-spacing:1.2px">67000.0</div><div class="t" style="left:11px;top:481px;color:#fff">Дискретность</div><div class="t" style="left:231px;top:481px;color:#fff;letter-spacing:1.2px">0.0</div><div class="t" style="left:453px;top:481px;color:#fff;letter-spacing:1.2px">0.0</div><div class="t" style="left:673px;top:481px;color:#fff;letter-spacing:1.2px">0.0</div><div class="t" style="left:895px;top:481px;color:#fff;letter-spacing:1.2px">0.0</div><div class="t" style="left:1115px;top:481px;color:#fff;letter-spacing:1.2px">0.0</div><div class="t" style="left:1337px;top:481px;color:#fff;letter-spacing:1.2px">0.0</div><div class="t" style="left:1557px;top:481px;color:#fff;letter-spacing:1.2px">0.0</div><div class="t" style="left:1779px;top:481px;color:#fff;letter-spacing:1.2px">0.0</div></div><svg style="position:absolute;left:2010px;top:516px" width="30" height="502"><rect x="0" y="0" width="30" height="502" fill="url(#sbBtn)"/><rect x="0" y="0" width="30" height="1.5" fill="#6a6a6a" opacity="0.5"/><path d="M0,34 L2,34 A28,16.5 0 0 1 30,50.5 L30,451.5 A28,16.5 0 0 1 2,468 L0,468 Z" fill="url(#sbTrk)"/><path d="M2,34 A28,16.5 0 0 1 30,50.5" fill="none" stroke="#000" stroke-opacity="0.55" stroke-width="2"/><path d="M30,451.5 A28,16.5 0 0 1 2,468" fill="none" stroke="#000" stroke-opacity="0.35" stroke-width="1.5"/><path d="M0,34.5 L2,34.5 A27,22 0 0 1 29,56.5 L29,180 A27,22 0 0 1 2,202 L0,202 Z" fill="url(#sbThm)" stroke="#000" stroke-width="2"/><polygon points="8.0,23.8 22.0,23.8 15.0,10.2" fill="#000"/><polygon points="8.0,477.9 22.0,477.9 15.0,491.5" fill="#000"/></svg><svg style="position:absolute;left:2048px;top:144px" width="30" height="882"><rect x="0" y="0" width="30" height="882" fill="url(#sbBtn)"/><rect x="0" y="0" width="30" height="1.5" fill="#6a6a6a" opacity="0.5"/><path d="M0,34 L2,34 A28,16.5 0 0 1 30,50.5 L30,830.5 A28,16.5 0 0 1 2,847 L0,847 Z" fill="url(#sbTrk)"/><path d="M2,34 A28,16.5 0 0 1 30,50.5" fill="none" stroke="#000" stroke-opacity="0.55" stroke-width="2"/><path d="M30,830.5 A28,16.5 0 0 1 2,847" fill="none" stroke="#000" stroke-opacity="0.35" stroke-width="1.5"/><path d="M0,309 L2,309 A27,22 0 0 1 29,331 L29,825 A27,22 0 0 1 2,847 L0,847 Z" fill="url(#sbThm)" stroke="#000" stroke-width="2"/><polygon points="8.0,23.8 22.0,23.8 15.0,10.2" fill="#000"/><polygon points="8.0,857.8000000000001 22.0,857.8000000000001 15.0,871.4" fill="#000"/></svg>
</body></html>
